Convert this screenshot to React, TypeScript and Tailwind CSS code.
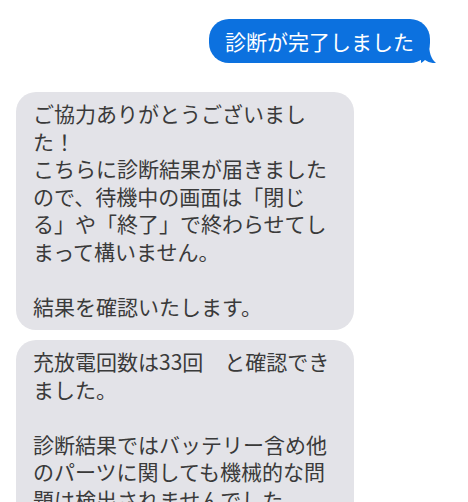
export default function App() {
  const font = { fontFamily: '"Noto Sans CJK JP", "Noto Sans", sans-serif' };

  return (
    <div className="min-h-screen bg-white overflow-hidden [text-spacing-trim:space-all]" style={font}>
      {/* outgoing */}
      <div className="flex justify-end pt-[19px] pr-[38px]">
        <div className="relative bg-[#0c71df] text-white text-[21px] leading-[28px] px-4 py-2 rounded-[20px]">
          診断が完了しました
          <svg
            className="absolute right-[-7px] bottom-0"
            width="16"
            height="20"
            viewBox="0 0 16 20"
          >
            <path
              d="M0 0 L8 0 C8 9 10 16 15 20 C11 20.5 7 19 4 17 C3 18 1 19.5 0 20 Z"
              fill="#0c71df"
            />
          </svg>
        </div>
      </div>

      {/* incoming */}
      <div className="flex flex-col gap-[10px] pl-4 mt-[29px]">
        <div className="w-[338px] bg-[#e3e3e8] text-[#3a3a3a] text-[21px] leading-[27.5px] pl-[17px] pr-[14px] pt-2 pb-[10px] rounded-[20px] whitespace-pre-wrap">
          {"ご協力ありがとうございました！\nこちらに診断結果が届きましたので、待機中の画面は「閉じる」や「終了」で終わらせてしまって構いません。\n\n結果を確認いたします。"}
        </div>
        <div className="w-[338px] bg-[#e3e3e8] text-[#3a3a3a] text-[21px] leading-[27.5px] pl-[17px] pr-[14px] pt-2 pb-[10px] rounded-[20px] whitespace-pre-wrap">
          {"充放電回数は33回　と確認できました。\n\n診断結果ではバッテリー含め他のパーツに関しても機械的な問題は検出されませんでした。"}
        </div>
      </div>
    </div>
  );
}
